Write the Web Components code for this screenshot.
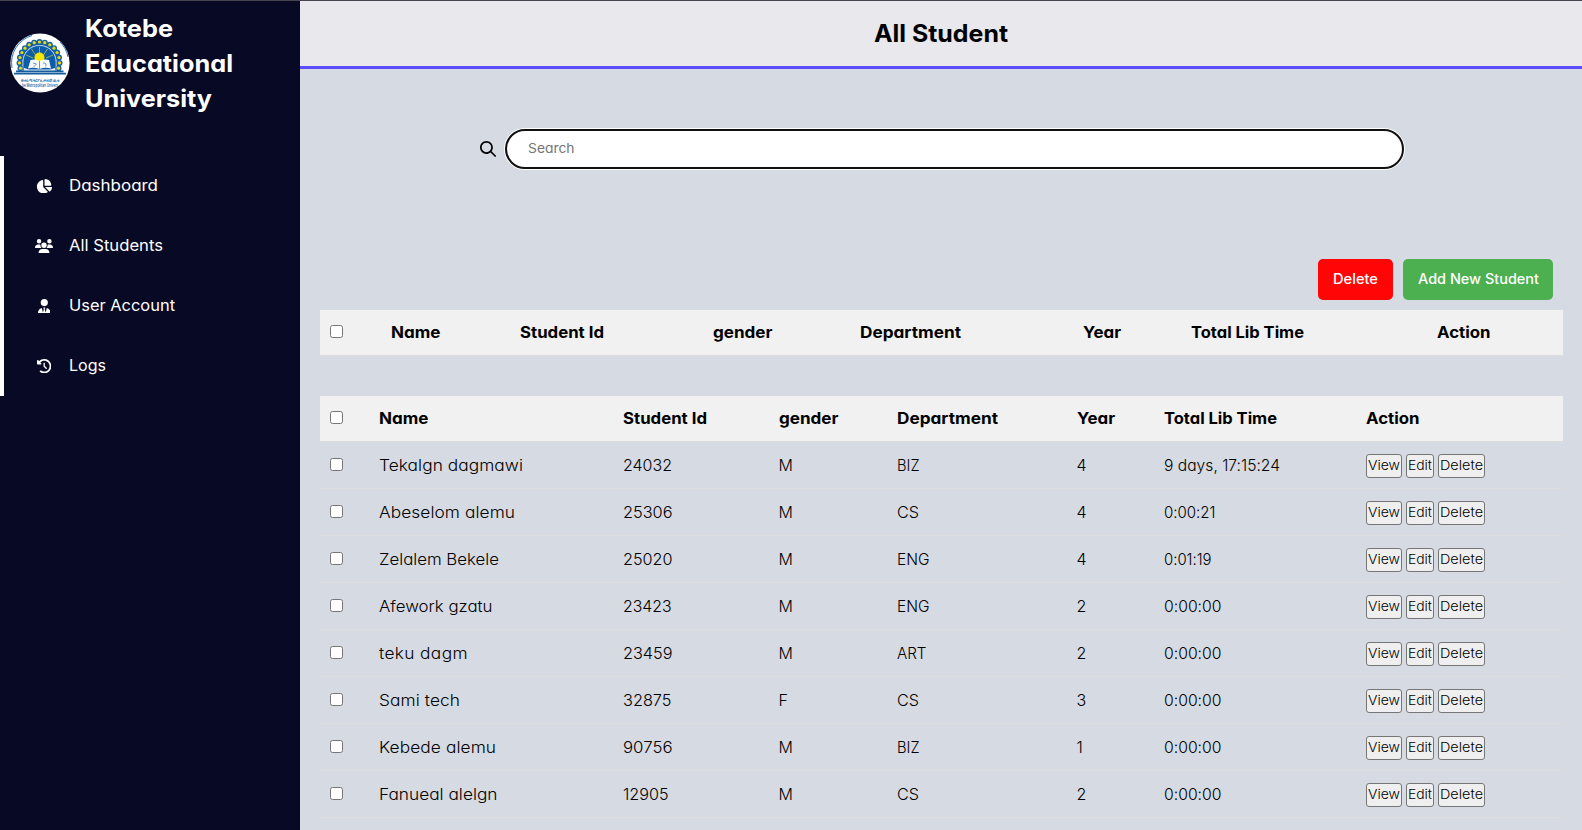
<!DOCTYPE html>
<html lang="en">
<head>
<meta charset="utf-8">
<title>All Student</title>
<style>
html,body{margin:0;height:100%;overflow:hidden}
body{font-family:Inter,"Open Sans",sans-serif;font-feature-settings:"cv11","calt" 0;font-size:16px;color:#000;background:#d6dae3}
</style>
</head>
<body>
<student-app></student-app>
<script>
const define = (name, html, setup) => customElements.define(name, class extends HTMLElement {
  connectedCallback() {
    if (this.shadowRoot) return;
    const root = this.attachShadow({mode: 'open'});
    const t = document.createElement('template');
    t.innerHTML = html;
    root.append(t.content.cloneNode(true));
    if (setup) setup.call(this, root);
  }
});

// A single line of text stretched to a given width.
define('fit-text', `<style>:host{display:inline-block;white-space:nowrap}span{display:inline-block;transform-origin:0 50%}</style><span></span>`, function (root) {
  const s = root.querySelector('span');
  s.textContent = this.getAttribute('text');
  const n = s.textContent.length, w = +this.getAttribute('w') + 1;
  const natural = s.getBoundingClientRect().width;
  if (n > 1) {
    const k = Math.min(1.08, w / natural);
    s.style.letterSpacing = (w / k - natural) / (n - 1) + 'px';
    s.style.transform = `scaleX(${k})`;
    this.style.width = w + 'px';
  }
});

const ICONS = {
  pie: ['0 0 576 512', 'M304 240V16.600c0-9 7-16.600 16-16.600C443.700 0 544 100.300 544 224c0 9-7.600 16-16.600 16H304zM32 272C32 150.700 122.100 50.300 239 34.300c9.200-1.300 17 6.100 17 15.400V288L412.500 444.500c6.700 6.700 6.200 17.700-1.500 23.100C371.800 495.600 323.800 512 272 512C139.500 512 32 404.600 32 272zm526.400 16c9.300 0 16.600 7.800 15.400 17c-7.700 55.900-34.600 105.600-73.900 142.300c-6 5.600-15.400 5.200-21.200-.7L320 288H558.400z'],
  group: ['0 0 640 512', 'M144 0a80 80 0 1 1 0 160A80 80 0 1 1 144 0zM512 0a80 80 0 1 1 0 160A80 80 0 1 1 512 0zM0 298.700C0 239.800 47.800 192 106.700 192h42.700c15.900 0 31 3.500 44.600 9.700c-1.300 7.200-1.900 14.700-1.900 22.300c0 38.200 16.800 72.500 43.300 96H21.300C9.600 320 0 310.400 0 298.700zM405.300 320h-.7c26.600-23.500 43.300-57.800 43.300-96c0-7.600-.7-15-1.900-22.300c13.600-6.300 28.700-9.700 44.600-9.700h42.700C592.200 192 640 239.800 640 298.700c0 11.800-9.600 21.300-21.300 21.300H405.300zM224 224a96 96 0 1 1 192 0 96 96 0 1 1-192 0zM128 485.300C128 411.700 187.700 352 261.300 352H378.700C452.300 352 512 411.700 512 485.300c0 14.700-11.900 26.700-26.700 26.700H154.700c-14.700 0-26.700-11.900-26.700-26.700z'],
  user: ['0 0 448 512', 'M96 128a128 128 0 1 0 256 0A128 128 0 1 0 96 128zm94.500 200.200l18.600 31L175.800 483.100l-36-146.900c-2-8.100-9.800-13.400-17.900-11.300C51.900 342.400 0 405.800 0 481.300c0 17 13.800 30.700 30.700 30.700H417.300c17 0 30.700-13.800 30.700-30.700c0-75.500-51.900-138.900-121.900-156.400c-8.100-2-15.900 3.300-17.900 11.300l-36 146.900L238.900 359.200l18.600-31c6.400-10.700-1.300-24.200-13.700-24.200H204.200c-12.400 0-20.100 13.600-13.700 24.200z'],
  history: ['0 0 512 512', 'M75 75L41 41C25.900 25.900 0 36.600 0 57.900V168c0 13.300 10.700 24 24 24H134.100c21.400 0 32.100-25.900 17-41l-30.800-30.800C155 85.500 203 64 256 64c106 0 192 86 192 192s-86 192-192 192c-40.800 0-78.600-12.700-109.700-34.400c-14.500-10.100-34.400-6.600-44.600 7.900s-6.600 34.400 7.900 44.600C151.200 495 201.700 512 256 512c141.400 0 256-114.600 256-256S397.400 0 256 0C185.300 0 121.300 28.700 75 75zm181 53c-13.300 0-24 10.700-24 24V256c0 6.400 2.500 12.500 7 17l72 72c9.400 9.400 24.600 9.400 33.900 0s9.400-24.600 0-33.900l-65-65V152c0-13.300-10.700-24-24-24z'],
  search: ['0 0 512 512', 'M412 206c0 47-16 90-42 125L506 467c10 10 10 24 1 33s-25 9-34 0L337 364c-35 28-82 48-131 48C92 412 0 320 0 206S92 0 206 0S412 92 412 206zM206 358a152 152 0 1 0 0-304 152 152 0 1 0 0 304z']
};
define('app-icon', `<style>:host{display:flex;justify-content:center;align-items:center}svg{display:block;fill:currentColor}</style><svg><path/></svg>`, function (root) {
  const [box, d] = ICONS[this.getAttribute('name')], h = +this.getAttribute('size');
  const svg = root.querySelector('svg'), [, , bw, bh] = box.split(' ').map(Number);
  svg.setAttribute('viewBox', box);
  svg.setAttribute('height', h);
  svg.setAttribute('width', h * bw / bh);
  root.querySelector('path').setAttribute('d', d);
});

// Gear teeth: dots along the upper arc of the emblem.
const teeth = (r, fill) => Array.from({length: 15}, (_, i) => {
  const a = Math.PI * (1.1 - i * 1.2 / 14);
  return `<circle cx="${(29.5 + 20 * Math.cos(a)).toFixed(1)}" cy="${(29 - 20 * Math.sin(a)).toFixed(1)}" r="${r}" fill="${fill}"/>`;
}).join('');
define('uni-logo', `<style>:host{display:block;width:60px;height:60px;margin-top:-1px}svg{display:block;overflow:visible}text{font:600 4.500px "Open Sans",sans-serif;fill:#155a9a}</style>
<svg width="60" height="60" viewBox="0 0 60 60">
<circle cx="30" cy="30" r="29.600" fill="#fff"/>
<path d="M50 9A28.500 28.500 0 0 1 58 24M2 35A28.500 28.500 0 0 1 22 2.500" fill="none" stroke="#2a72b4" stroke-width="1"/>
${teeth(3, '#1560a8')}
<path d="M10.500 37.500V29a19 19 0 0 1 38 0v8.500" fill="none" stroke="#1560a8" stroke-width="4"/>
${teeth(1.6, '#e3dc10')}
<path d="M13 38v-9a16.500 16.500 0 0 1 33 0v9z" fill="#0c5ca8" stroke="#a9cbe2" stroke-width=".8"/>
<path d="M29.500 20V14M25.500 22l-4-6M33.500 22l4-6M23 25l-7-3M36 25l7-3" stroke="#c9cc4a" stroke-width=".7"/>
<circle cx="29.500" cy="24.500" r="5" fill="#f3e600"/>
<path d="M20.500 27q5.500-1.500 9 1 4-2.500 9.500-1l2 8.500q-6-1.500-11.500.5-6-2-11.500-.5z" fill="#f5f9f8"/>
<path d="M29.500 28v8M23 30l3.500 1-3 3M33 30q4.500 0 2.500 3.500" fill="none" stroke="#5d92b4" stroke-width=".9"/>
<path d="M14 35l5 1.500h21L45 35v3H14z" fill="#e6eff5"/>
<path d="M6 37.500h47.500v1.800H6zM4 39.800h52v1.700H4z" fill="#155d9f"/>
<text x="10.500" y="49" textLength="39" lengthAdjust="spacingAndGlyphs">የኮተቤ ሜትሮፖሊታን ዩኒቨርሲቲ</text>
<text x="12" y="54" textLength="36" lengthAdjust="spacingAndGlyphs">be Metropolitan Univers</text>
</svg>`);

define('nav-item', `<style>:host{display:flex;align-items:center;height:60px;color:#fff}.icon{display:flex;justify-content:center;align-items:center;width:20px;margin:0 14.500px 0 34px;height:20px}.label{margin-top:-2px}</style><div class="icon"></div><div class="label"><slot></slot></div>`, function (root) {
  const n = document.createElement('app-icon');
  n.setAttribute('name', this.getAttribute('icon'));
  n.setAttribute('size', 14.4);
  root.querySelector('.icon').append(n);
});

define('side-bar', `<style>
:host{display:block;width:300px;flex:none;background:#070925;color:#fff}
.brand{display:flex;align-items:center;gap:15px;height:125px;padding-left:10px}
.name{display:flex;flex-direction:column;font-weight:700;font-size:24px;line-height:35px}
nav{margin-top:30px;border-left:4px solid #fff;height:240px}
nav nav-item{margin-left:-4px}
</style>
<div class="brand"><uni-logo></uni-logo><div class="name"><fit-text text="Kotebe" w="87"></fit-text><fit-text text="Educational" w="147"></fit-text><fit-text text="University" w="126"></fit-text></div></div>
<nav>
<nav-item icon="pie"><fit-text text="Dashboard" w="88"></fit-text></nav-item>
<nav-item icon="group"><fit-text text="All Students" w="93"></fit-text></nav-item>
<nav-item icon="user"><fit-text text="User Account" w="105"></fit-text></nav-item>
<nav-item icon="history"><fit-text text="Logs" w="36"></fit-text></nav-item>
</nav>`);

define('page-header', `<style>:host{display:flex;justify-content:center;align-items:center;height:65px;border-bottom:3px solid #5b4dff;background:#e9e8ed;font-weight:650;font-size:24px}</style><slot></slot>`);

define('search-bar', `<style>
:host{display:flex;align-items:center;margin:61px 178px 0 179px;height:38px}
.field{flex:1;box-sizing:border-box;height:40px;border:2px solid #101010;border-radius:20px;background:#fff;box-shadow:0 0 0 1px #fff;padding:0 0 2px 20.500px;display:flex;align-items:center;font-size:13.333px;color:#757575}
app-icon{width:17px;margin-right:9px}
</style><app-icon name="search" size="16"></app-icon><div class="field"><fit-text text="Search" w="45.500"></fit-text></div>`);

define('action-button', `<style>:host{display:flex;align-items:center;justify-content:center;box-sizing:border-box;height:41px;padding-bottom:2px;border-radius:5px;color:#fff;font-size:14px;font-weight:500}
:host([kind=danger]){background:#ff0505;width:75px}:host([kind=add]){background:#4caf50;width:150px}</style><slot></slot>`);

define('row-button', `<style>:host{display:flex;align-items:center;justify-content:center;box-sizing:border-box;height:24px;padding-bottom:2px;border:1px solid #767676;border-radius:3px;background:#efefef;font-size:13.333px;font-weight:300;color:#000}</style><slot></slot>`);

define('check-box', `<style>:host{display:block;margin-left:10px}i{display:block;box-sizing:border-box;width:13px;height:13px;border:1px solid #767676;border-radius:2.500px;background:#fff}</style><i></i>`);

define('table-row', `<style>
:host{display:grid;grid-template-columns:59px 244px 155.500px 118px 180px 87px 202.500px 1fr;align-items:center;box-sizing:border-box;height:47px;border-bottom:1px solid #ddd;font-weight:300}
:host([head]){height:46px;background:#f1f1f1;font-weight:650}
:host([wide]){grid-template-columns:71px 129px 193px 146.500px 223.500px 107.500px 246px 1fr}
::slotted(check-box){margin-top:-2px}
::slotted(fit-text){padding-bottom:1px}
::slotted(.acts){display:flex;gap:4px;padding-top:2px}
</style><slot></slot>`);

const HEAD = [['Name', 48.5], ['Student Id', 83], ['gender', 58.5], ['Department', 100], ['Year', 37], ['Total Lib Time', 112], ['Action', 52.5]];
const W = {M: 12.5, F: 8, BIZ: 21.5, CS: 21, ENG: 31.5, ART: 28.5};
const ROWS = [
  ['Tekalgn dagmawi', 143, '24032', 48, 'M', 'BIZ', '4', '9 days, 17:15:24', 115],
  ['Abeselom alemu', 135, '25306', 48.5, 'M', 'CS', '4', '0:00:21', 50.5],
  ['Zelalem Bekele', 119, '25020', 48.5, 'M', 'ENG', '4', '0:01:19', 46.5],
  ['Afework gzatu', 112.5, '23423', 47.5, 'M', 'ENG', '2', '0:00:00', 56.5],
  ['teku dagm', 87.5, '23459', 48.5, 'M', 'ART', '2', '0:00:00', 56.5],
  ['Sami tech', 80, '32875', 47.5, 'F', 'CS', '3', '0:00:00', 56.5],
  ['Kebede alemu', 116, '90756', 48.5, 'M', 'BIZ', '1', '0:00:00', 56.5],
  ['Fanueal alelgn', 117.5, '12905', 44.5, 'M', 'CS', '2', '0:00:00', 56.5]
];
const ft = (t, w) => `<fit-text text="${t}" w="${w}"></fit-text>`;
const head = HEAD.map(([t, w]) => ft(t, w)).join('');

define('student-table', `<style>
:host{display:block;margin:10px 19px 0 20px}
.gap{height:40px}
</style>
<table-row head wide><check-box></check-box>${head}</table-row>
<div class="gap"></div>
<table-row head><check-box></check-box>${head}</table-row>
${ROWS.map(r => `<table-row><check-box></check-box>${ft(r[0], r[1])}${ft(r[2], r[3])}${ft(r[4], W[r[4]])}${ft(r[5], W[r[5]])}${ft(r[6], 9)}${ft(r[7], r[8])}<div class="acts"><row-button style="width:36px">${ft('View', 31)}</row-button><row-button style="width:28px">${ft('Edit', 23)}</row-button><row-button style="width:47px">${ft('Delete', 42)}</row-button></div></table-row>`).join('')}`);

define('student-app', `<style>
:host{display:flex;box-sizing:border-box;height:830px;border-top:1px solid #47454f;overflow:hidden}
main{flex:1;min-width:0;background:#d6dae3}
.bar{display:flex;justify-content:flex-end;gap:10px;margin:91px 29px 0 0}
</style>
<side-bar></side-bar>
<main>
<page-header><fit-text text="All Student" w="133"></fit-text></page-header>
<search-bar></search-bar>
<div class="bar"><action-button kind="danger"><fit-text text="Delete" w="44"></fit-text></action-button><action-button kind="add"><fit-text text="Add New Student" w="120"></fit-text></action-button></div>
<student-table></student-table>
</main>`);
</script>
</body>
</html>
